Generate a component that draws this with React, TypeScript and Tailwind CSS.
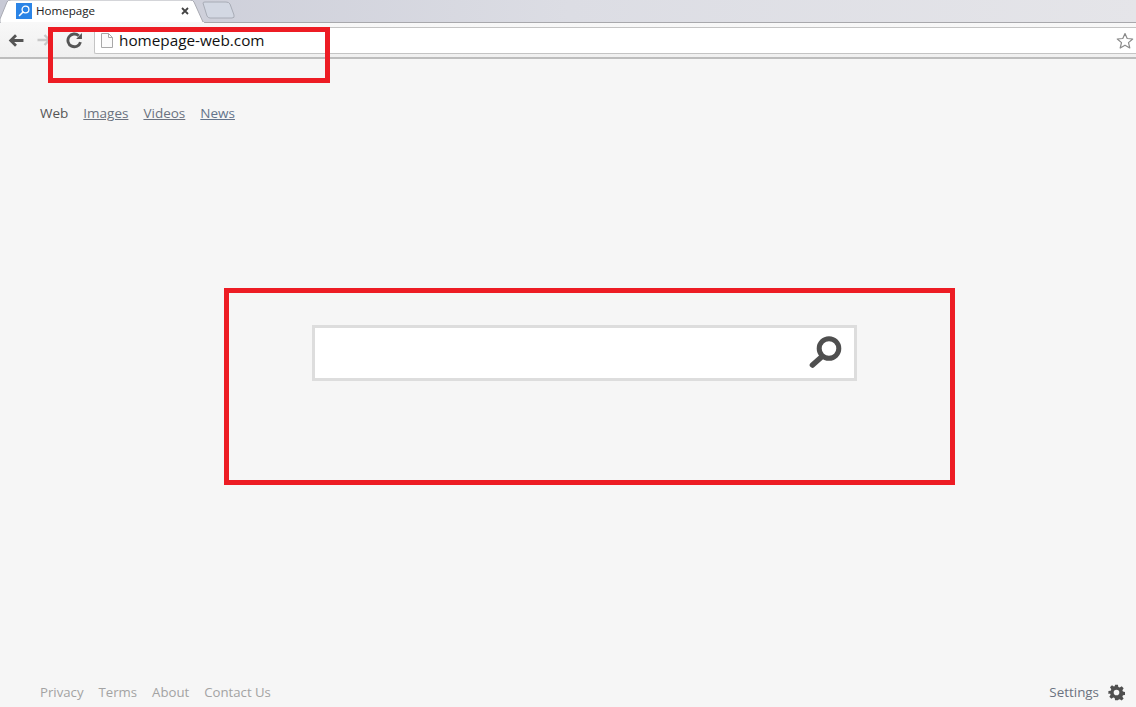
import React from "react";

const font = { fontFamily: '"Open Sans", "Noto Sans", sans-serif' };

function TabShape() {
  return (
    <svg className="absolute left-0 top-0" width="240" height="23" viewBox="0 0 240 23">
      <path d="M0 23 L0 19 L7 2 Q8 0 11 0 L190 0 Q193 0 194 2 L203 22 L205 23 Z" fill="#ffffff" stroke="#a9abb3" strokeWidth="1" />
      <path d="M203 3 Q203 2 205 2 L226 2 Q229 2 230 4 L234 15 Q235 18 232 18 L210 18 Q208 18 207 16 Z" fill="#d3d8e3" stroke="#a8acb6" strokeWidth="1" />
      <path d="M1 23 L204 23" stroke="#f8f8f8" strokeWidth="2" />
    </svg>
  );
}

function Favicon() {
  return (
    <div className="w-4 h-4 bg-[#2b84e6] flex items-center justify-center">
      <svg width="14" height="14" viewBox="0 0 14 14" fill="none">
        <circle cx="8.500" cy="5.500" r="3.400" stroke="#fff" strokeWidth="1.300" />
        <path d="M6 8 L2.500 11.500" stroke="#fff" strokeWidth="1.600" strokeLinecap="round" />
      </svg>
    </div>
  );
}

export default function App() {
  return (
    <div className="relative w-[1136px] h-[707px] overflow-hidden bg-[#f6f6f6] flex flex-col" style={font}>
      {/* tab strip */}
      <div className="relative h-[23px] shrink-0 bg-gradient-to-r from-[#c7c9d5] via-[#dcdde4] to-[#e5e5e9] border-b border-[#a8a8ac]">
        <TabShape />
        <div className="relative flex items-center h-[22px] pl-4 w-[189px]">
          <Favicon />
          <span className="ml-1 text-[11.6px] text-[#222]">Homepage</span>
          <svg className="ml-auto" width="8" height="8" viewBox="0 0 8 8">
            <path d="M1 1 L7 7 M7 1 L1 7" stroke="#444" strokeWidth="1.800" />
          </svg>
        </div>
      </div>

      {/* toolbar */}
      <div className="h-[36px] shrink-0 bg-gradient-to-b from-[#f8f8f8] to-[#f0f0f0] border-b-2 border-[#bdbdbd] flex items-start">
        <div className="flex items-center h-[34px] pl-[8px] w-[94px]">
          <svg width="16" height="15" viewBox="0 0 15 14" fill="none">
            <path d="M14.500 7 H3 M7.500 2 L2.500 7 L7.500 12" stroke="#555" strokeWidth="2.600" />
          </svg>
          <svg className="ml-[13px]" width="15" height="14" viewBox="0 0 15 14" fill="none">
            <path d="M0.500 7 H12 M7.500 2 L12.500 7 L7.500 12" stroke="#c8c8c8" strokeWidth="2.400" />
          </svg>
          <svg className="ml-[14px]" width="17" height="17" viewBox="0 0 16 16" fill="none">
            <path d="M13.600 9.500 A6 6 0 1 1 12 3.600" stroke="#555" strokeWidth="2.700" />
            <path d="M9.500 6.500 H15 V1 Z" fill="#555" />
          </svg>
        </div>
        <div className="mt-[4px] flex-1 h-[27px] bg-white border border-[#c4c4c4] border-r-0 rounded-tl-[2px] rounded-bl-[2px] flex items-center pl-[6px] pr-[2px]">
          <svg width="12" height="15" viewBox="0 0 12 15" fill="none">
            <path d="M0.500 0.500 H7.500 L11.500 4.500 V14.500 H0.500 Z M7.500 0.500 V4.500 H11.500" fill="#fbfbfb" stroke="#a8a8a8" />
          </svg>
          <span className="ml-[6px] text-[15.300px] leading-none text-[#111]">homepage-web.com</span>
          <svg className="ml-auto" width="18" height="18" viewBox="0 0 18 18" fill="#fff">
            <path d="M9 1.500 L11.200 6.500 L16.700 7 L12.500 10.600 L13.800 16 L9 13.200 L4.200 16 L5.500 10.600 L1.300 7 L6.800 6.500 Z" stroke="#8a8a8a" strokeWidth="1.200" strokeLinejoin="round" />
          </svg>
        </div>
      </div>

      {/* page */}
      <div className="flex-1 flex flex-col">
        <nav className="pl-10 pt-[44px] flex gap-[15px] text-[13.500px] leading-[20px] text-[#6b7280]">
          <span className="text-[#555]">Web</span>
          <a className="underline">Images</a>
          <a className="underline">Videos</a>
          <a className="underline text-[#64748b]">News</a>
        </nav>

        <div className="flex-1 flex">
          <div className="mt-[202px] ml-[312px] w-[545px] h-[56px] bg-white border-[3px] border-[#dddddd] flex items-start justify-end pr-[12px] pt-[8px]">
            <svg width="34" height="34" viewBox="0 0 34 34" fill="none">
              <circle cx="21" cy="12.500" r="9.800" stroke="#4f4f4f" strokeWidth="5" />
              <path d="M13.500 21 L4.500 29" stroke="#4f4f4f" strokeWidth="5.600" strokeLinecap="round" />
            </svg>
          </div>
        </div>

        <footer className="h-[28px] shrink-0 pl-10 pr-[11px] flex items-center pb-[1px] text-[13.200px] text-[#a3a3a3]">
          <div className="flex gap-[15px]">
            <a>Privacy</a>
            <a>Terms</a>
            <a>About</a>
            <a>Contact Us</a>
          </div>
          <span className="ml-auto text-[13.400px] text-[#6b7280]">Settings</span>
          <svg className="ml-[9px]" width="17" height="17" viewBox="0 0 24 24" fill="#4f4f4f">
            <path fillRule="evenodd" d="M10 1h4l.6 3.200 2 .8L19.300 3.200l2.800 2.800-1.800 2.700.8 2 3.200.6v4l-3.200.6-.8 2 1.800 2.700-2.800 2.800-2.700-1.800-2 .8L14 23h-4l-.6-3.200-2-.8-2.700 1.800-2.800-2.800 1.800-2.700-.8-2L.6 14v-4l3.200-.6.800-2L2.800 4.700 5.600 1.900l2.700 1.800 1.100-.5zM12 8a4 4 0 1 0 0 8 4 4 0 0 0 0-8z" />
          </svg>
        </footer>
      </div>

      {/* red annotation boxes drawn over the screenshot */}
      <div className="absolute left-[48px] top-[27px] w-[282px] h-[56px] border-[5px] border-[#ed1c24]" />
      <div className="absolute left-[224px] top-[288px] w-[731px] h-[197px] border-[5px] border-[#ed1c24]" />
    </div>
  );
}
